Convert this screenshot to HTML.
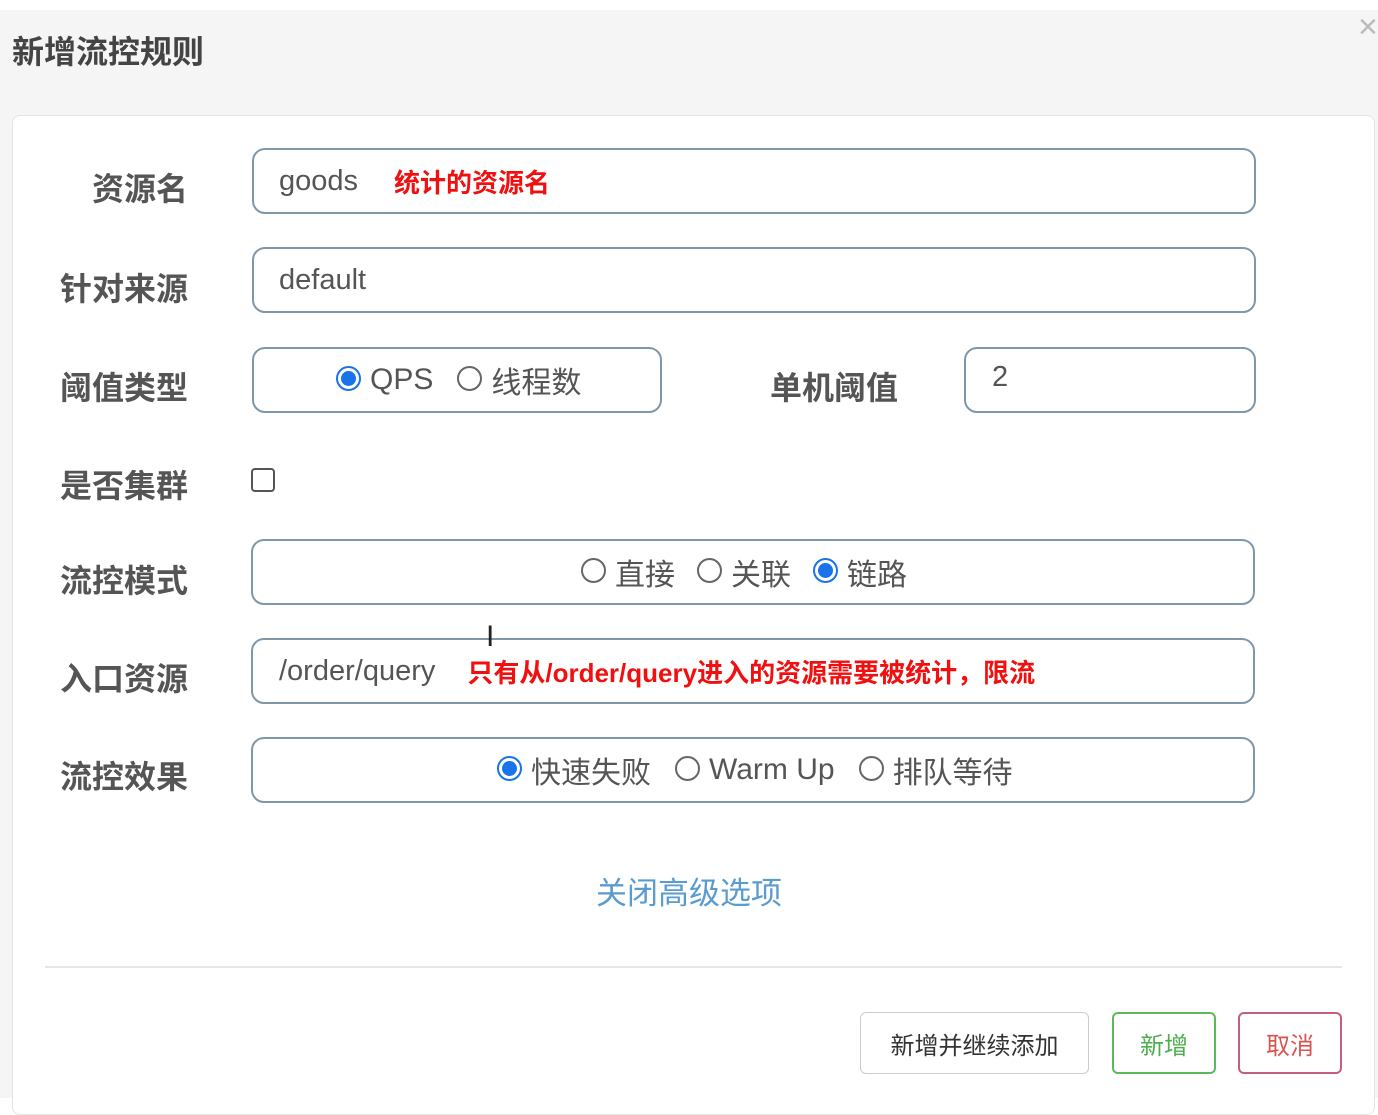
<!DOCTYPE html>
<html><head><meta charset="utf-8"><style>
*{box-sizing:border-box;margin:0;padding:0}
body{width:1378px;height:1098px;background:#fff;font-family:"Liberation Sans","Noto Sans CJK SC",sans-serif;position:relative;overflow:hidden;color:#555}
.top{position:absolute;left:0;top:10px;width:1378px;height:1088px;background:#f5f5f5}
.title{position:absolute;left:12px;top:27px;font-size:32px;font-weight:bold;color:#444}
.x{position:absolute;left:1358px;top:8px;font-size:34px;color:#bbb}
.panel{position:absolute;left:12px;top:115px;width:1363px;height:1000px;background:#fff;border:1px solid #e3e3e3;border-radius:8px}
.lbl{position:absolute;font-size:32px;font-weight:bold;color:#555;text-align:right;width:180px;left:8px}
.box{position:absolute;border:2px solid #8097aa;border-radius:13px;height:66px;font-size:29px;color:#555;display:flex;align-items:center}
.rb{font-size:30px}
.red{color:#f01010;font-weight:bold;font-size:26px}
.r{display:inline-block;width:25px;height:25px;border:2px solid #666;border-radius:50%;vertical-align:middle;margin-right:9px;position:relative;top:-2px}
.r.on{border-color:#1a73e8}
.r.on:after{content:"";position:absolute;left:3px;top:3px;width:15px;height:15px;border-radius:50%;background:#1a73e8}
.btn{position:absolute;top:1012px;height:62px;border-radius:6px;font-size:24px;display:flex;align-items:center;justify-content:center;background:#fff}
</style></head><body>
<div class="top"></div>
<div class="title">新增流控规则</div>
<div class="x">×</div>
<div class="panel"></div>
<div class="lbl" style="top:164px">资源名</div>
<div class="box" style="left:252px;top:148px;width:1004px;padding-left:25px">goods<span class="red" style="margin-left:36px">统计的资源名</span></div>
<div class="lbl" style="top:264px">针对来源</div>
<div class="box" style="left:252px;top:247px;width:1004px;padding-left:25px">default</div>
<div class="lbl" style="top:363px">阈值类型</div>
<div class="box rb" style="left:252px;top:347px;width:410px;padding-left:82px"><span class="r on"></span>QPS<span class="r" style="margin-left:24px"></span>线程数</div>
<div style="position:absolute;left:770px;top:363px;font-size:32px;font-weight:bold">单机阈值</div>
<div class="box" style="left:964px;top:347px;width:292px;padding-left:26px;align-items:flex-start;padding-top:12px">2</div>
<div class="lbl" style="top:461px">是否集群</div>
<div style="position:absolute;left:251px;top:468px;width:24px;height:24px;border:2px solid #555;border-radius:4px"></div>
<div class="lbl" style="top:556px">流控模式</div>
<div class="box rb" style="left:251px;top:539px;width:1004px;padding-left:328px"><span class="r"></span>直接<span class="r" style="margin-left:22px"></span>关联<span class="r on" style="margin-left:22px"></span>链路</div>
<div class="lbl" style="top:654px">入口资源</div>
<div class="box" style="left:251px;top:638px;width:1004px;padding-left:26px">/order/query<span class="red" style="margin-left:32px">只有从/order/query进入的资源需要被统计，限流</span></div>
<div style="position:absolute;left:486px;top:620px;font-size:30px;color:#222">I</div>
<div class="lbl" style="top:752px">流控效果</div>
<div class="box rb" style="left:251px;top:737px;width:1004px;padding-left:244px"><span class="r on"></span>快速失败<span class="r" style="margin-left:24px"></span>Warm Up<span class="r" style="margin-left:24px"></span>排队等待</div>
<div style="position:absolute;left:596px;top:868px;font-size:31px;color:#5a9bd0">关闭高级选项</div>
<div style="position:absolute;left:45px;top:966px;width:1297px;height:2px;background:#e5e5e5"></div>
<div class="btn" style="left:860px;width:229px;border:1px solid #ccc;color:#333">新增并继续添加</div>
<div class="btn" style="left:1112px;width:104px;border:2px solid #5cb85c;color:#4cae4c">新增</div>
<div class="btn" style="left:1238px;width:104px;border:2px solid #c0607a;color:#d9534f">取消</div>
</body></html>
